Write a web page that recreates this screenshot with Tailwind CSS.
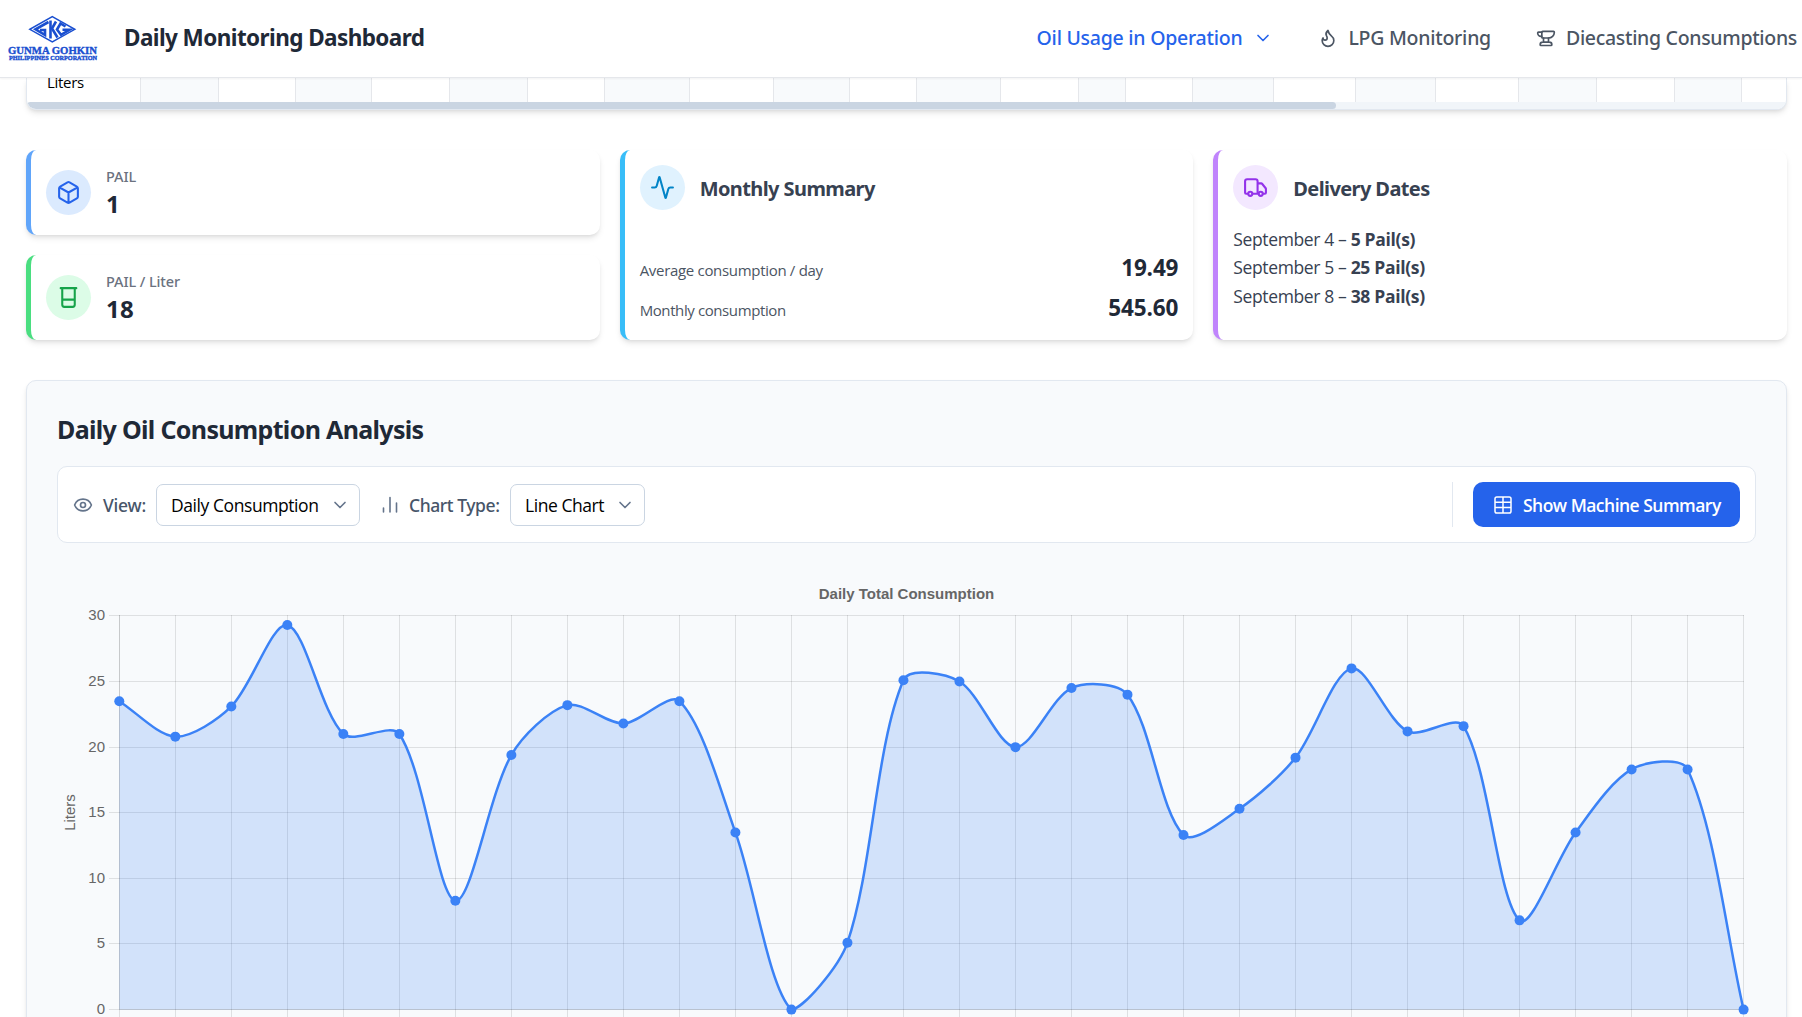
<!DOCTYPE html>
<html lang="en">
<head>
<meta charset="utf-8">
<title>Daily Monitoring Dashboard</title>
<script src="https://cdn.jsdelivr.net/npm/@tailwindcss/browser@4"></script>
</head>
<body class="bg-white font-['Open_Sans','Noto_Sans',sans-serif] text-[#1f2937] h-[1017px] overflow-hidden whitespace-nowrap">
<div class="w-[1802px] h-[1017px] flex flex-col overflow-hidden">
  <header class="relative z-10 h-[78px] shrink-0 bg-white border-b border-gray-200 shadow-[0_1px_2px_rgba(0,0,0,0.05)] flex items-center">
    <svg class="ml-2 -mt-px shrink-0" width="92" height="52" viewBox="8 12 92 52">
      <path d="M52.300 16.700 74.800 29.300 52.300 42 29.800 29.300Z" fill="#fff" stroke="#1a4fd0" stroke-width="1.500"/>
      <g fill="none" stroke="#1a4fd0" stroke-width="2.600">
        <path d="M48.500 22 35.500 29.300 45 35V30h-5"/>
        <path d="M50.500 20.500v18"/>
        <path d="M56 21.500 52 28.500l5.500 9"/>
        <path d="M65.500 26.500 60.500 23.500 57 29.500 61 34.800 69.500 29.800H62.500"/>
      </g>
      <text x="8" y="53.700" textLength="89" lengthAdjust="spacingAndGlyphs" font-family="Liberation Serif, serif" font-weight="700" font-size="11.300" fill="#1a4fd0" stroke="#1a4fd0" stroke-width=".4">GUNMA GOHKIN</text>
      <text x="9" y="59.700" textLength="88" lengthAdjust="spacingAndGlyphs" font-family="Liberation Serif, serif" font-weight="700" font-size="6.600" fill="#1a4fd0" stroke="#1a4fd0" stroke-width=".4">PHILIPPINES CORPORATION</text>
    </svg>
    <h1 class="ml-[24px] -mt-px font-['Noto_Sans',sans-serif] text-[22.500px] font-bold tracking-[-0.58px]">Daily Monitoring Dashboard</h1>
    <nav class="ml-auto -mt-px flex items-center font-['Noto_Sans',sans-serif] text-[19.500px] font-medium tracking-[-0.25px] text-[#4b5563] pr-[5px]">
      <a class="flex items-center text-[#2563eb]">Oil Usage in Operation
        <svg class="ml-[11px]" width="20" height="20" viewBox="0 0 24 24" fill="none" stroke="currentColor" stroke-width="2" stroke-linecap="round" stroke-linejoin="round"><path d="m6 9 6 6 6-6"/></svg></a>
      <a class="flex items-center ml-[45px]">
        <svg class="mr-[10px]" width="20" height="20" viewBox="0 0 24 24" fill="none" stroke="currentColor" stroke-width="2" stroke-linecap="round" stroke-linejoin="round"><path d="M8.500 14.500A2.500 2.500 0 0 0 11 12c0-1.380-.5-2-1-3-1.072-2.143-.224-4.054 2-6 .5 2.500 2 4.900 4 6.500 2 1.600 3 3.500 3 5.500a7 7 0 1 1-14 0c0-1.153.433-2.294 1-3a2.500 2.500 0 0 0 2.500 2.500z"/></svg>
        LPG Monitoring</a>
      <a class="flex items-center ml-[45px]">
        <svg class="mr-[10px]" width="20" height="20" viewBox="0 0 24 24" fill="none" stroke="currentColor" stroke-width="2" stroke-linecap="round" stroke-linejoin="round"><path d="M7 10H6a4 4 0 0 1-4-4 1 1 0 0 1 1-1h4"/><path d="M7 5a1 1 0 0 1 1-1h13a1 1 0 0 1 1 1 7 7 0 0 1-7 7H8a1 1 0 0 1-1-1z"/><path d="M9 12v5M15 12v5M5 20a3 3 0 0 1 3-3h8a3 3 0 0 1 3 3 1 1 0 0 1-1 1H6a1 1 0 0 1-1-1"/></svg>
        <span class="tracking-[-0.31px]">Diecasting Consumptions</span></a>
    </nav>
  </header>

  <main class="w-[1761px] ml-[26px]">
    <section class="h-8 rounded-b-[10px] border border-t-0 border-slate-200 shadow-md overflow-hidden flex flex-col bg-white">
      <div id="cells" class="h-6 flex">
        <div class="w-[114px] shrink-0 border-r border-gray-200 pl-5 text-[15px] leading-[15px] -mt-[3px] tracking-[-0.28px] text-black">Liters</div>
      </div>
      <div class="h-[7px] bg-slate-100"><div class="h-full w-[1309px] rounded-full bg-slate-300"></div></div>
    </section>

    <section class="mt-10 grid grid-cols-3 gap-5 h-[190px]">
      <div class="flex flex-col gap-5">
        <div class="h-[85px] rounded-[10px] border-l-[5px] border-[#60a5fa] shadow-md bg-white flex items-center pl-[15px]">
          <div class="size-[45px] rounded-full bg-[#dbeafe] text-[#2563eb] flex items-center justify-center">
            <svg width="25" height="25" viewBox="0 0 24 24" fill="none" stroke="currentColor" stroke-width="2" stroke-linejoin="round" stroke-linecap="round"><path d="M21 16V8a2 2 0 0 0-1-1.730l-7-4a2 2 0 0 0-2 0l-7 4A2 2 0 0 0 3 8v8a2 2 0 0 0 1 1.730l7 4a2 2 0 0 0 2 0l7-4A2 2 0 0 0 21 16zM3.300 7 12 12l8.700-5M12 22V12"/></svg>
          </div>
          <div class="ml-[15px] pt-[3px]">
            <div class="font-['Noto_Sans',sans-serif] text-[14.500px] leading-5 font-medium tracking-[-0.1px] text-[#6b7280]">PAIL</div>
            <div class="text-[24px] leading-[36px] font-bold">1</div>
          </div>
        </div>
        <div class="h-[85px] rounded-[10px] border-l-[5px] border-[#4ade80] shadow-md bg-white flex items-center pl-[15px]">
          <div class="size-[45px] rounded-full bg-[#dcfce7] text-[#16a34a] flex items-center justify-center">
            <svg width="25" height="25" viewBox="0 0 24 24" fill="none" stroke="currentColor" stroke-width="2" stroke-linecap="round"><path d="M4.500 3h15M6 3v16a2 2 0 0 0 2 2h8a2 2 0 0 0 2-2V3M6 14h12"/></svg>
          </div>
          <div class="ml-[15px] pt-[3px]">
            <div class="font-['Noto_Sans',sans-serif] text-[14.500px] leading-5 font-medium tracking-[-0.1px] text-[#6b7280]">PAIL / Liter</div>
            <div class="text-[24px] leading-[36px] font-bold tracking-[0.25px]">18</div>
          </div>
        </div>
      </div>

      <div class="rounded-[10px] border-l-[5px] border-[#38bdf8] shadow-md bg-white p-[15px] flex flex-col">
        <div class="flex items-center">
          <div class="size-[45px] rounded-full bg-[#e0f2fe] text-[#0284c7] flex items-center justify-center">
            <svg width="25" height="25" viewBox="0 0 24 24" fill="none" stroke="currentColor" stroke-width="2" stroke-linejoin="round" stroke-linecap="round"><path d="M22 12h-2.480a2 2 0 0 0-1.930 1.460l-2.350 8.360a.25.25 0 0 1-.48 0L9.240 2.180a.25.25 0 0 0-.48 0l-2.350 8.360A2 2 0 0 1 4.490 12H2"/></svg>
          </div>
          <h2 class="ml-[15px] pt-[2px] font-['Noto_Sans',sans-serif] text-[20px] font-bold tracking-[-0.59px] text-[#374151]">Monthly Summary</h2>
        </div>
        <div class="mt-auto flex flex-col">
          <div class="h-10 flex items-center justify-between"><span class="text-[15px] text-[#4b5563] pt-[7px] tracking-[-0.31px]">Average consumption / day</span><span class="pt-px text-[22.500px] font-bold tracking-[-0.15px]">19.49</span></div>
          <div class="h-10 flex items-center justify-between -mb-[2px]"><span class="text-[15px] text-[#4b5563] pt-[7px] tracking-[-0.4px]">Monthly consumption</span><span class="pt-px text-[22.500px] font-bold tracking-[-0.12px]">545.60</span></div>
        </div>
      </div>

      <div class="rounded-[10px] border-l-[5px] border-[#c084fc] shadow-md bg-white p-[15px]">
        <div class="flex items-center">
          <div class="size-[45px] rounded-full bg-[#f3e8ff] text-[#9333ea] flex items-center justify-center">
            <svg width="25" height="25" viewBox="0 0 24 24" fill="none" stroke="currentColor" stroke-width="2" stroke-linejoin="round" stroke-linecap="round"><path d="M14 18V6a2 2 0 0 0-2-2H4a2 2 0 0 0-2 2v11a1 1 0 0 0 1 1h2M15 18H9M19 18h2a1 1 0 0 0 1-1v-3.650a1 1 0 0 0-.22-.624l-3.480-4.350A1 1 0 0 0 17.520 8H14"/><circle cx="17" cy="18" r="2"/><circle cx="7" cy="18" r="2"/></svg>
          </div>
          <h2 class="ml-[15px] pt-[2px] font-['Noto_Sans',sans-serif] text-[20px] font-bold tracking-[-0.6px] text-[#374151]">Delivery Dates</h2>
        </div>
        <ul class="mt-[15px] text-[17.500px] leading-[28.400px] text-[#374151] tracking-[-0.37px]">
          <li>September 4 – <b class="font-bold tracking-[-0.31px]">5 Pail(s)</b></li>
          <li>September 5 – <b class="font-bold tracking-[-0.31px]">25 Pail(s)</b></li>
          <li>September 8 – <b class="font-bold tracking-[-0.31px]">38 Pail(s)</b></li>
        </ul>
      </div>
    </section>

    <section class="mt-10 h-[700px] rounded-[10px] border border-slate-200 bg-slate-50 shadow-md px-[30px] pt-[29px]">
      <h2 class="font-['Noto_Sans',sans-serif] text-[25px] leading-[38px] font-bold tracking-[-0.67px]">Daily Oil Consumption Analysis</h2>
      <div class="mt-[18px] h-[77px] rounded-[10px] border border-slate-200 bg-white flex items-center px-[15px] text-[17.500px]">
        <svg class="text-[#64748b]" width="20" height="20" viewBox="0 0 24 24" fill="none" stroke="currentColor" stroke-width="2"><path d="M2.062 12.348a1 1 0 0 1 0-.696 10.750 10.750 0 0 1 19.876 0 1 1 0 0 1 0 .696 10.750 10.750 0 0 1-19.876 0"/><circle cx="12" cy="12" r="3"/></svg>
        <span class="ml-[10px] w-[43px] pt-[2px] font-['Noto_Sans',sans-serif] font-medium tracking-[-0.2px] text-[#475569]">View:</span>
        <div class="ml-[10px] w-[204px] h-[42px] rounded-[7px] border border-slate-300 flex items-center justify-between pl-[14px] pr-[9px] text-black"><span class="pt-[2px] tracking-[-0.43px]">Daily Consumption</span>
          <svg class="text-[#64748b]" width="20" height="20" viewBox="0 0 24 24" fill="none" stroke="currentColor" stroke-width="2" stroke-linecap="round" stroke-linejoin="round"><path d="m6 9 6 6 6-6"/></svg></div>
        <svg class="ml-[20px] text-[#64748b]" width="20" height="22" viewBox="0 0 20 22" fill="none" stroke="currentColor" stroke-width="1.600" stroke-linecap="round"><path d="M3.500 14v4M10 3.500V18M16.500 9v9"/></svg>
        <span class="ml-[9px] w-[91px] pt-[2px] font-['Noto_Sans',sans-serif] font-medium tracking-[-0.42px] text-[#475569]">Chart Type:</span>
        <div class="ml-[10px] w-[135px] h-[42px] rounded-[7px] border border-slate-300 flex items-center justify-between pl-[14px] pr-[9px] text-black"><span class="pt-[2px] tracking-[-0.45px]">Line Chart</span>
          <svg class="text-[#64748b]" width="20" height="20" viewBox="0 0 24 24" fill="none" stroke="currentColor" stroke-width="2" stroke-linecap="round" stroke-linejoin="round"><path d="m6 9 6 6 6-6"/></svg></div>
        <div class="ml-auto h-[45px] border-l border-slate-200 pl-5 flex">
          <button class="w-[267px] h-[45px] rounded-[10px] bg-[#2563eb] text-white flex items-center pl-[20px]">
            <svg class="shrink-0" width="20" height="20" viewBox="0 0 20 20" fill="none" stroke="currentColor" stroke-width="1.500"><rect x="2" y="2" width="16" height="16" rx="1.800"/><path d="M2 7.300h16M2 12.600h16M10 2v16"/></svg>
            <span class="ml-[10px] pt-[2px] font-semibold tracking-[-0.52px]">Show Machine Summary</span>
          </button>
        </div>
      </div>
      <svg id="chart" class="-ml-[31px] block max-w-none" width="1761" height="474" viewBox="26 543 1761 474" font-family="Liberation Sans, Arial, sans-serif" fill="#666"></svg>
    </section>
  </main>
</div>
<script>
// Column edges of the usage table's visible row
const bounds = [140,218,295,371,449,527,604,689,773,849,916,1000,1078,1125,1192,1273,1355,1435,1518,1596,1674,1741,1786];
const cells = document.getElementById('cells');
for (let i = 1; i < bounds.length; i++) {
  const d = document.createElement('div');
  d.className = 'shrink-0 h-6' + (i < bounds.length - 1 ? ' border-r border-gray-200' : '') + (i % 2 ? ' bg-slate-50' : '');
  d.style.width = (bounds[i] - bounds[i - 1]) + 'px';
  cells.appendChild(d);
}
// Daily totals in liters
const values = [23.5,20.8,23.1,29.3,21,21,8.3,19.4,23.2,21.8,23.5,13.5,0,5.1,25.1,25,20,24.5,24,13.3,15.3,19.2,26,21.2,21.6,6.8,13.5,18.3,18.3,0];
const X0 = 119.3, X1 = 1743.6, Y0 = 1009.6, Y1 = 615.9;
const px = i => X0 + (X1 - X0) * i / 29, py = v => Y0 - (Y0 - Y1) * v / 30;
const pts = values.map((v, i) => [px(i), py(v)]);
const clamp = y => Math.min(Y0, Math.max(Y1, y));
const cps = pts.map((p, i) => {
  const a = pts[i - 1] || p, b = pts[i + 1] || p;
  const d0 = Math.hypot(p[0] - a[0], p[1] - a[1]), d1 = Math.hypot(b[0] - p[0], b[1] - p[1]);
  const fa = .3 * d0 / (d0 + d1), fb = .3 * d1 / (d0 + d1);
  return [[p[0] - fa * (b[0] - a[0]), clamp(p[1] - fa * (b[1] - a[1]))], [p[0] + fb * (b[0] - a[0]), clamp(p[1] + fb * (b[1] - a[1]))]];
});
let line = `M${pts[0]}`;
for (let i = 1; i < pts.length; i++) line += `C${cps[i - 1][1]} ${cps[i][0]} ${pts[i]}`;
let out = '';
[1009, 943, 878, 812, 747, 681, 615].forEach((row, i) => {
  const y = row + .5;
  out += `<path d="M109 ${y}H1744" stroke="#000" stroke-opacity=".1"/><text x="105" y="${y + 4.5}" text-anchor="end" font-size="15">${i * 5}</text>`;
});
for (let i = 0; i < 30; i++) {
  const x = Math.floor(px(i)) + .5;
  out += `<path d="M${x} 615V1017" stroke="#000" stroke-opacity=".1"/>`;
}
out += `<path d="M119.5 615V1009.5H1744" fill="none" stroke="#000" stroke-opacity=".1"/>`;
out += `<path d="${line}L${X1} ${Y0}L${X0} ${Y0}Z" fill="#3b82f6" fill-opacity=".2"/><path d="${line}" fill="none" stroke="#3b82f6" stroke-width="2.5"/>`;
pts.forEach(p => out += `<circle cx="${p[0]}" cy="${p[1]}" r="5" fill="#3b82f6"/>`);
out += `<text x="906.500" y="599" text-anchor="middle" font-size="15" font-weight="700" textLength="175.500">Daily Total Consumption</text>`;
out += `<text transform="translate(75 812.5) rotate(-90)" text-anchor="middle" font-size="15">Liters</text>`;
document.getElementById('chart').innerHTML = out;
</script>
</body>
</html>
